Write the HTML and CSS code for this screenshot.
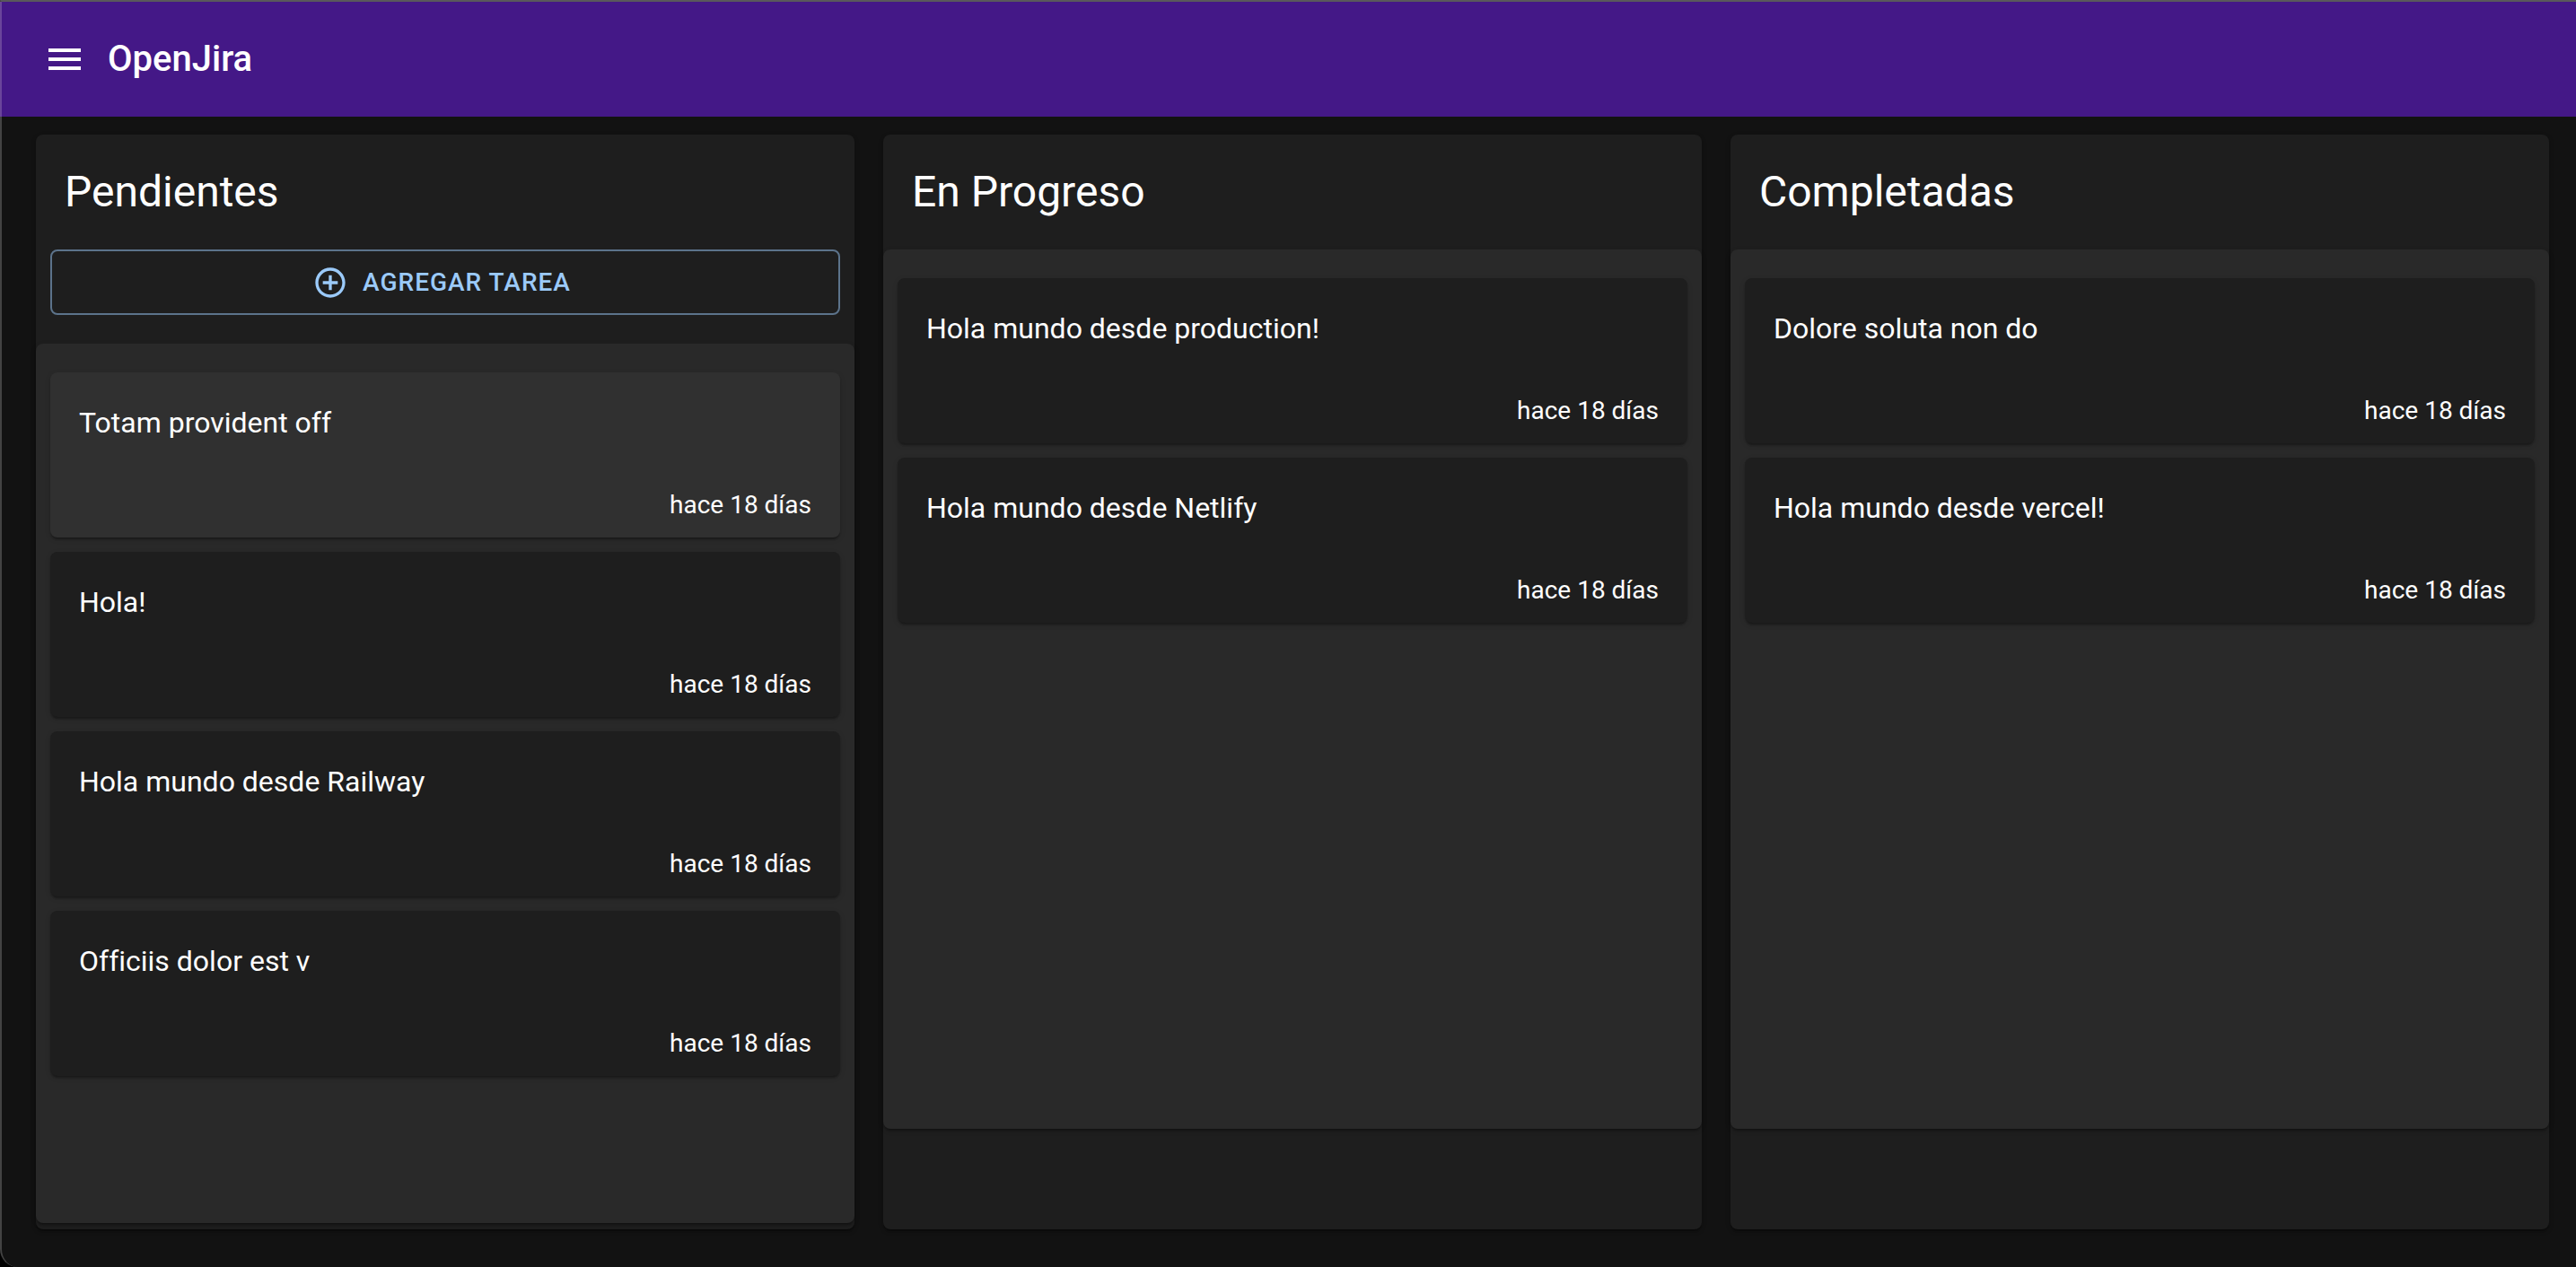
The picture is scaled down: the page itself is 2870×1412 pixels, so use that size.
FILE: index.html
```html
<!DOCTYPE html>
<html lang="es">
<head>
  <meta charset="utf-8">
  <meta name="viewport" content="width=device-width, initial-scale=1">
  <title>OpenJira</title>
  <link rel="stylesheet" href="styles.css">
</head>
<body>
  <div class="app">
    <header class="navbar">
      <button class="menu-button" type="button" aria-label="Abrir menú">
        <svg class="menu-icon" viewBox="0 0 24 24" aria-hidden="true"><path d="M3 18h18v-2H3v2zm0-5h18v-2H3v2zm0-7v2h18V6H3z"/></svg>
      </button>
      <h1 class="brand">OpenJira</h1>
    </header>

    <main class="board">
      <section class="column">
        <h2 class="column-title">Pendientes</h2>
        <button class="add-button" type="button">
          <svg class="add-icon" viewBox="0 0 24 24" aria-hidden="true"><path d="M13 7h-2v4H7v2h4v4h2v-4h4v-2h-4V7zm-1-5C6.48 2 2 6.48 2 12s4.48 10 10 10 10-4.48 10-10S17.52 2 12 2zm0 18c-4.41 0-8-3.59-8-8s3.59-8 8-8 8 3.59 8 8-3.59 8-8 8z"/></svg>
          Agregar tarea
        </button>
        <div class="task-list">
          <article class="task task-hover">
            <p class="task-text">Totam provident off</p>
            <p class="task-date">hace 18 días</p>
          </article>
          <article class="task">
            <p class="task-text">Hola!</p>
            <p class="task-date">hace 18 días</p>
          </article>
          <article class="task">
            <p class="task-text">Hola mundo desde Railway</p>
            <p class="task-date">hace 18 días</p>
          </article>
          <article class="task">
            <p class="task-text">Officiis dolor est v</p>
            <p class="task-date">hace 18 días</p>
          </article>
        </div>
      </section>

      <section class="column">
        <h2 class="column-title">En Progreso</h2>
        <div class="task-list">
          <article class="task">
            <p class="task-text">Hola mundo desde production!</p>
            <p class="task-date">hace 18 días</p>
          </article>
          <article class="task">
            <p class="task-text">Hola mundo desde Netlify</p>
            <p class="task-date">hace 18 días</p>
          </article>
        </div>
      </section>

      <section class="column">
        <h2 class="column-title">Completadas</h2>
        <div class="task-list">
          <article class="task">
            <p class="task-text">Dolore soluta non do</p>
            <p class="task-date">hace 18 días</p>
          </article>
          <article class="task">
            <p class="task-text">Hola mundo desde vercel!</p>
            <p class="task-date">hace 18 días</p>
          </article>
        </div>
      </section>
    </main>
  </div>
</body>
</html>
```

FILE: styles.css
```css
* {
  box-sizing: border-box;
}

body {
  margin: 0;
  background: #000;
  color: #fff;
  font-family: Roboto, "Liberation Sans", sans-serif;
  font-size: 32px;
  font-variant-ligatures: none;
  line-height: 48px;
}

h1,
h2,
p {
  margin: 0;
}

.app {
  min-height: 100vh;
  border-top: 2px solid #5a595b;
  border-left: 2px solid #434343;
  border-bottom-left-radius: 20px;
  background: #121212;
}

.navbar {
  display: flex;
  align-items: center;
  gap: 24px;
  height: 128px;
  margin-left: -2px;
  padding: 0 46px;
  border-left: 2px solid #6a459b;
  background: #441887;
}

.menu-button {
  display: flex;
  padding: 0;
  border: 0;
  background: none;
  color: inherit;
}

.menu-icon {
  width: 48px;
  height: 48px;
  fill: currentColor;
}

.brand {
  font-size: 40px;
  font-weight: 500;
  line-height: 64px;
}

.board {
  display: grid;
  grid-template-columns: repeat(3, minmax(0, 1fr));
  gap: 32px;
  padding: 20px 30px 40px 38px;
}

.column,
.task-list,
.task {
  border-radius: 8px;
  box-shadow: 0 4px 2px -2px rgba(0, 0, 0, 0.2), 0 2px 2px rgba(0, 0, 0, 0.14), 0 2px 6px rgba(0, 0, 0, 0.12);
}

.column {
  display: flex;
  flex-direction: column;
  min-height: calc(100vh - 192px);
  background: #1e1e1e;
}

.column-title {
  padding: 32px;
  font-size: 48px;
  font-weight: 400;
  line-height: 64px;
}

.add-button {
  display: flex;
  align-items: center;
  justify-content: center;
  gap: 16px;
  margin: 0 16px 32px;
  padding: 10px 32px 10px 24px;
  border: 2px solid #5c738b;
  border-radius: 8px;
  background: none;
  color: #9bcaf9;
  font: inherit;
  font-size: 28px;
  font-weight: 500;
  line-height: 49px;
  letter-spacing: 1px;
  text-transform: uppercase;
}

.add-icon {
  width: 40px;
  height: 40px;
  fill: currentColor;
}

.task-list {
  display: flex;
  flex-direction: column;
  gap: 16px;
  min-height: calc(100vh - 432px);
  padding: 32px 16px;
  background: #292929;
}

.task {
  background: #1e1e1e;
}

.task-hover,
.task:hover {
  background: #303030;
}

.task-text {
  padding: 32px;
}

.task-date {
  padding: 16px 32px;
  font-size: 28px;
  line-height: 40px;
  text-align: right;
}
```
